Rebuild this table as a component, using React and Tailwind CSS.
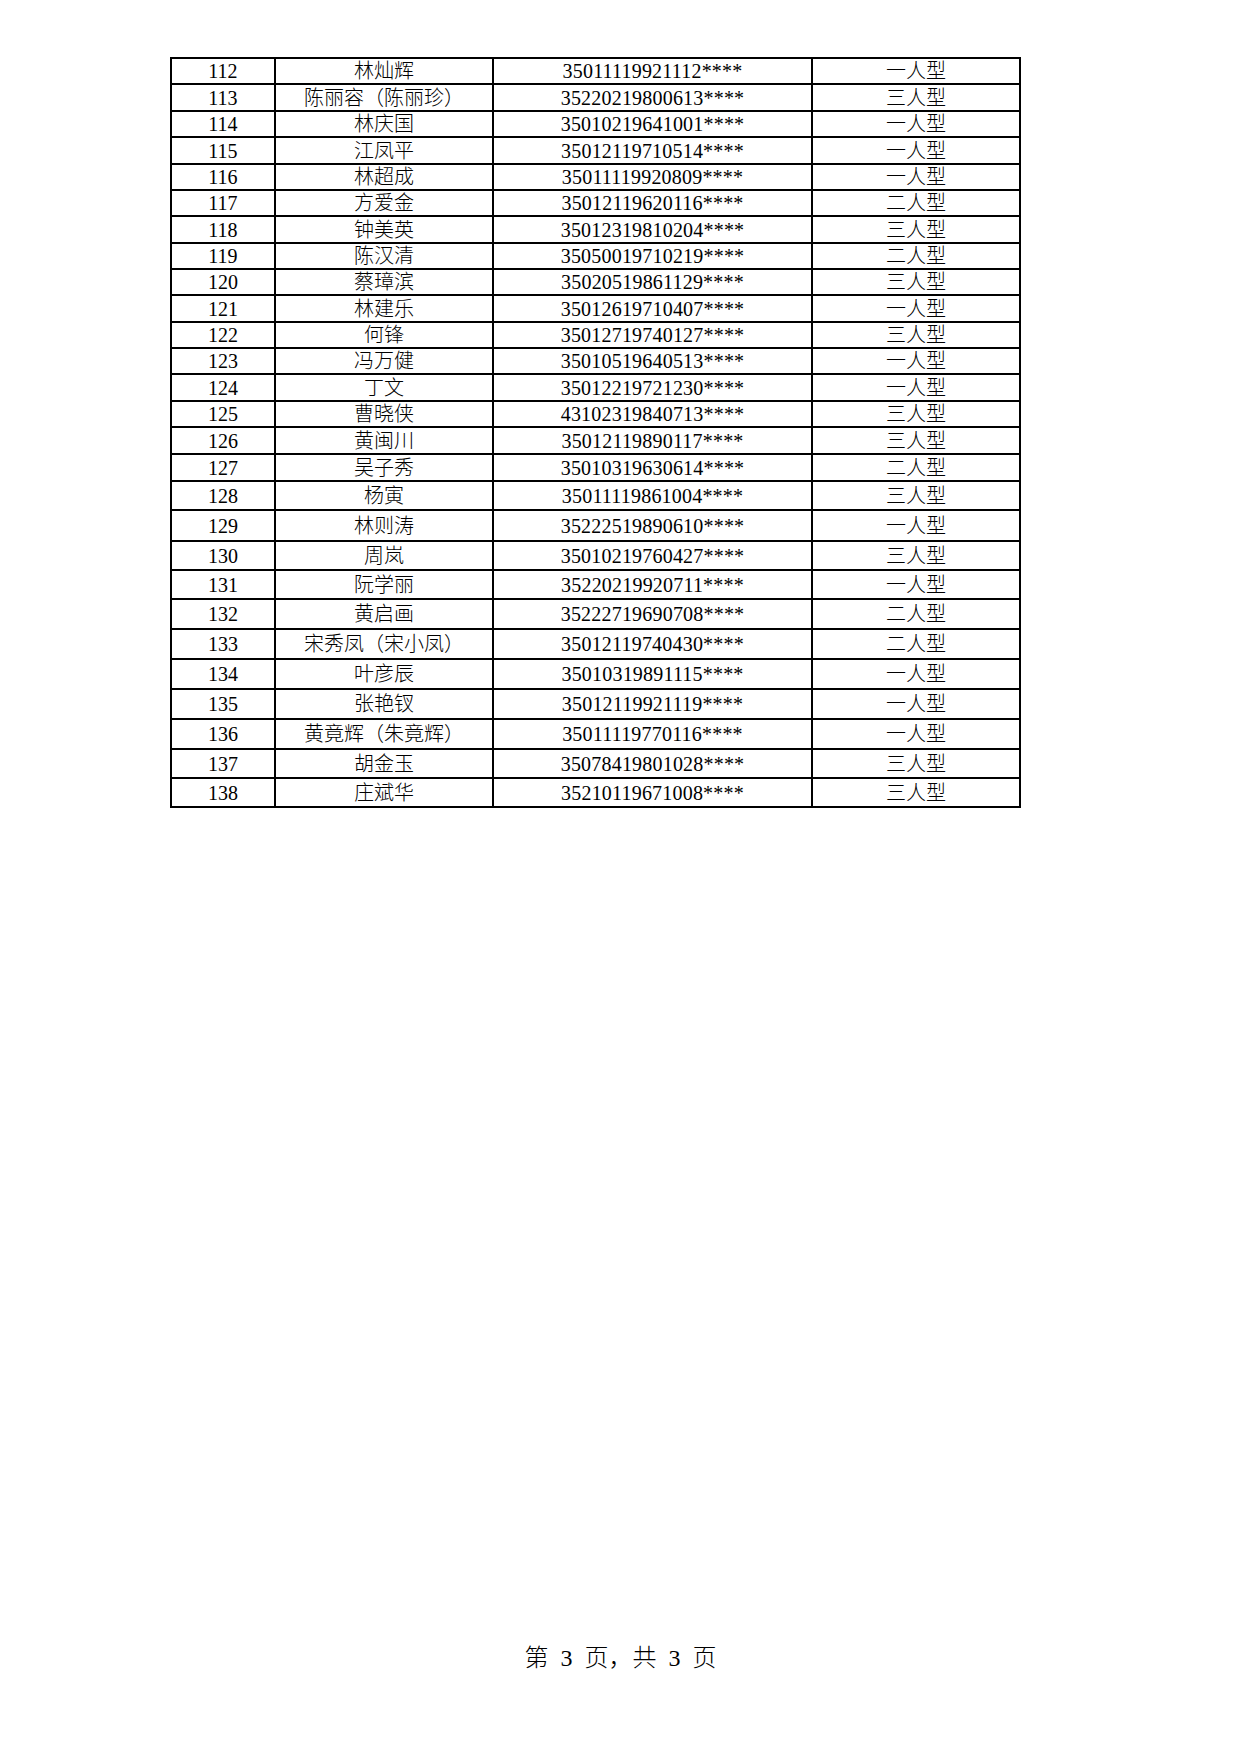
import React from "react";

const rows = [
  ["112", "林灿辉", "35011119921112****", "一人型", "h-[26px]"],
  ["113", "陈丽容（陈丽珍）", "35220219800613****", "三人型", "h-[27px]"],
  ["114", "林庆国", "35010219641001****", "一人型", "h-[26px]"],
  ["115", "江凤平", "35012119710514****", "一人型", "h-[27px]"],
  ["116", "林超成", "35011119920809****", "一人型", "h-[26px]"],
  ["117", "方爱金", "35012119620116****", "二人型", "h-[26px]"],
  ["118", "钟美英", "35012319810204****", "三人型", "h-[27px]"],
  ["119", "陈汉清", "35050019710219****", "二人型", "h-[26px]"],
  ["120", "蔡璋滨", "35020519861129****", "三人型", "h-[26px]"],
  ["121", "林建乐", "35012619710407****", "一人型", "h-[27px]"],
  ["122", "何锋", "35012719740127****", "三人型", "h-[26px]"],
  ["123", "冯万健", "35010519640513****", "一人型", "h-[26px]"],
  ["124", "丁文", "35012219721230****", "一人型", "h-[27px]"],
  ["125", "曹晓侠", "43102319840713****", "三人型", "h-[26px]"],
  ["126", "黄闽川", "35012119890117****", "三人型", "h-[27px]"],
  ["127", "吴子秀", "35010319630614****", "二人型", "h-[27px]"],
  ["128", "杨寅", "35011119861004****", "三人型", "h-[29px]"],
  ["129", "林则涛", "35222519890610****", "一人型", "h-[31px]"],
  ["130", "周岚", "35010219760427****", "三人型", "h-[29px]"],
  ["131", "阮学丽", "35220219920711****", "一人型", "h-[29px]"],
  ["132", "黄启画", "35222719690708****", "二人型", "h-[30px]"],
  ["133", "宋秀凤（宋小凤）", "35012119740430****", "二人型", "h-[30px]"],
  ["134", "叶彦辰", "35010319891115****", "一人型", "h-[30px]"],
  ["135", "张艳钗", "35012119921119****", "一人型", "h-[30px]"],
  ["136", "黄竟辉（朱竟辉）", "35011119770116****", "一人型", "h-[30px]"],
  ["137", "胡金玉", "35078419801028****", "三人型", "h-[29px]"],
  ["138", "庄斌华", "35210119671008****", "三人型", "h-[29px]"],
];

export default function App() {
  return (
    <div
      className="w-[1241px] h-[1754px] bg-white text-black flex flex-col font-light"
      style={{ fontFamily: '"Liberation Serif", "Noto Sans CJK SC", serif' }}
    >
      <div className="pt-[57px] pl-[170px]">
        <div className="w-[851px] border-t-2 border-l-2 border-r-2 border-black text-[20px] leading-none">
          {rows.map((r) => (
            <div key={r[0]} className={`flex border-b-2 border-black ${r[4]}`}>
              <div className="w-[104px] border-r-2 border-black flex items-center justify-center">
                {r[0]}
              </div>
              <div className="w-[218px] border-r-2 border-black flex items-center justify-center whitespace-nowrap">
                {r[1]}
              </div>
              <div className="w-[319px] border-r-2 border-black flex items-center justify-center tracking-[0.2px]">
                {r[2]}
              </div>
              <div className="flex-1 flex items-center justify-center">
                {r[3]}
              </div>
            </div>
          ))}
        </div>
      </div>
      <div className="mt-auto mb-[84px] h-[24px] text-[24px] leading-[24px] text-center whitespace-pre [word-spacing:6px]">
        第 3 页，共 3 页
      </div>
    </div>
  );
}
